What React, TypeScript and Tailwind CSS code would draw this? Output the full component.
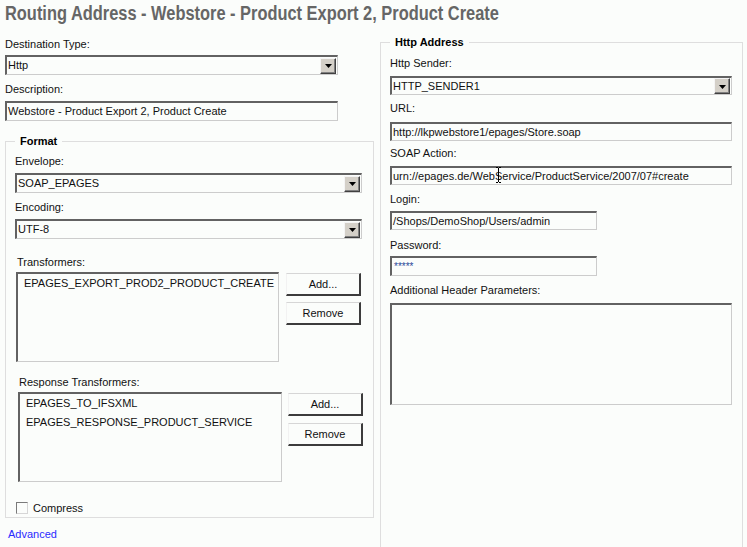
import React from "react";

function Arrow() {
  return (
    <span className="w-[16px] h-[16px] mr-[1px] flex items-center justify-center bg-[#d4d0c8] border border-t-[#f4f4f4] border-l-[#f4f4f4] border-r-[#404040] border-b-[#404040] shadow-[inset_-1px_-1px_0_#808080]">
      <svg width="7" height="4" viewBox="0 0 7 4" className="mt-[1px]">
        <path d="M0 0H7L3.5 4Z" fill="#000" />
      </svg>
    </span>
  );
}

const inset =
  "border-t-2 border-l-2 border-r border-b border-t-[#626262] border-l-[#626262] border-r-[#cccccc] border-b-[#cccccc] bg-[#fbfdfb]";

function Select({ value, w, h }: { value: string; w: string; h: string }) {
  return (
    <div className={`${w} ${h} flex items-center ${inset}`}>
      <span className="flex-1 pl-[1px] whitespace-nowrap overflow-hidden">{value}</span>
      <Arrow />
    </div>
  );
}

function Input({ value, w, h }: { value: string; w: string; h: string }) {
  return (
    <div className={`${w} ${h} flex items-center ${inset}`}>
      <span className="pl-[1px] whitespace-nowrap overflow-hidden">{value}</span>
    </div>
  );
}

function Btn({ children }: { children: React.ReactNode }) {
  return (
    <div className="w-[75px] h-[23px] flex items-center justify-center border-t border-l border-t-[#d6d6d6] border-l-[#f2f2f2] border-r-2 border-b-2 border-r-[#3c3c3c] border-b-[#3c3c3c] text-[#111]">
      {children}
    </div>
  );
}

function Label({ children, cls }: { children: React.ReactNode; cls: string }) {
  return <div className={`h-[14px] leading-[14px] whitespace-nowrap ${cls}`}>{children}</div>;
}

export default function App() {
  return (
    <div className="w-[747px] h-[547px] overflow-hidden bg-[#fbfdfb] text-[11px] text-[#111] font-['Liberation_Sans',Arial,sans-serif]">
      <div className="pl-[5px] pt-[2px] h-[24px] whitespace-nowrap">
        <span className="inline-block origin-left scale-x-[0.82] text-[20px] leading-[22px] font-bold text-[#666666] font-['Liberation_Sans',Arial,sans-serif]">
          Routing Address - Webstore - Product Export 2, Product Create
        </span>
      </div>
      <div className="flex pl-[5px] gap-[6px]">
        {/* left column */}
        <div className="w-[369px] flex flex-col">
          <Label cls="mt-[13px]">Destination Type:</Label>
          <div className="mt-[4px]">
            <Select value="Http" w="w-[333px]" h="h-[20px]" />
          </div>
          <Label cls="mt-[7px]">Description:</Label>
          <div className="mt-[5px]">
            <Input value="Webstore - Product Export 2, Product Create" w="w-[333px]" h="h-[20px]" />
          </div>
          <fieldset className="mt-[13px] w-[369px] border border-[#dedede] pl-[9px] pr-0 pt-0 pb-[2px]">
            <legend className="px-[5px] font-bold leading-[14px] text-[#000]">Format</legend>
            <Label cls="mt-[6px]">Envelope:</Label>
            <div className="mt-[5px]">
              <Select value="SOAP_EPAGES" w="w-[347px]" h="h-[20px]" />
            </div>
            <Label cls="mt-[7px]">Encoding:</Label>
            <div className="mt-[5px]">
              <Select value="UTF-8" w="w-[347px]" h="h-[20px]" />
            </div>
            <Label cls="mt-[16px] ml-[2px]">Transformers:</Label>
            <div className="flex mt-[3px] ml-[1px]">
              <div className={`w-[263px] h-[90px] pl-[6px] ${inset}`}>
                <div className="h-[19px] leading-[19px]">EPAGES_EXPORT_PROD2_PRODUCT_CREATE</div>
              </div>
              <div className="flex flex-col gap-[6px] ml-[7px] mt-[1px]">
                <Btn>Add...</Btn>
                <Btn>Remove</Btn>
              </div>
            </div>
            <Label cls="mt-[13px] ml-[4px]">Response Transformers:</Label>
            <div className="flex mt-[3px] ml-[3px]">
              <div className={`w-[264px] h-[90px] pl-[6px] ${inset}`}>
                <div className="h-[19px] leading-[19px]">EPAGES_TO_IFSXML</div>
                <div className="h-[19px] leading-[19px]">EPAGES_RESPONSE_PRODUCT_SERVICE</div>
              </div>
              <div className="flex flex-col gap-[7px] ml-[6px] mt-[1px]">
                <Btn>Add...</Btn>
                <Btn>Remove</Btn>
              </div>
            </div>
            <div className="flex items-center mt-[19px] ml-[1px] h-[14px]">
              <span className="w-[12px] h-[12px] border border-t-[#7a7a7a] border-l-[#7a7a7a] border-r-[#d6d6d6] border-b-[#d6d6d6] bg-[#fbfdfb]" />
              <span className="ml-[5px]">Compress</span>
            </div>
          </fieldset>
          <div className="mt-[9px] ml-[3px] h-[14px] leading-[14px] text-[#2a2aff]">Advanced</div>
        </div>

        {/* right column */}
        <fieldset className="mt-[11px] w-[363px] h-[540px] border border-[#dedede] pl-[9px] pr-0 pt-0 pb-0">
          <legend className="px-[5px] font-bold leading-[14px] text-[#000]">Http Address</legend>
          <Label cls="mt-[7px]">Http Sender:</Label>
          <div className="mt-[6px]">
            <Select value="HTTP_SENDER1" w="w-[342px]" h="h-[19px]" />
          </div>
          <Label cls="mt-[6px]">URL:</Label>
          <div className="mt-[7px]">
            <Input value="http://lkpwebstore1/epages/Store.soap" w="w-[342px]" h="h-[19px]" />
          </div>
          <Label cls="mt-[5px]">SOAP Action:</Label>
          <div className="mt-[6px] relative">
            <Input value="urn://epages.de/WebService/ProductService/2007/07#create" w="w-[342px]" h="h-[19px]" />
            <svg width="5" height="16" viewBox="0 0 5 16" className="absolute left-[106px] top-[1px]">
              <path d="M0 0.5H2M3 0.5H5M2.5 1V15M0 15.5H2M3 15.5H5" stroke="#000" strokeWidth="1" fill="none" />
            </svg>
          </div>
          <Label cls="mt-[7px]">Login:</Label>
          <div className="mt-[5px]">
            <Input value="/Shops/DemoShop/Users/admin" w="w-[207px]" h="h-[19px]" />
          </div>
          <Label cls="mt-[8px]">Password:</Label>
          <div className="mt-[4px]">
            <div className={`w-[207px] h-[20px] ${inset}`}>
              <span className="pl-[2px] text-[10px] leading-[10px] text-[#2a4a9a] tracking-[0px]">*****</span>
            </div>
          </div>
          <Label cls="mt-[7px]">Additional Header Parameters:</Label>
          <div className="mt-[6px]">
            <div className={`w-[342px] h-[102px] ${inset}`} />
          </div>
        </fieldset>
      </div>
    </div>
  );
}
